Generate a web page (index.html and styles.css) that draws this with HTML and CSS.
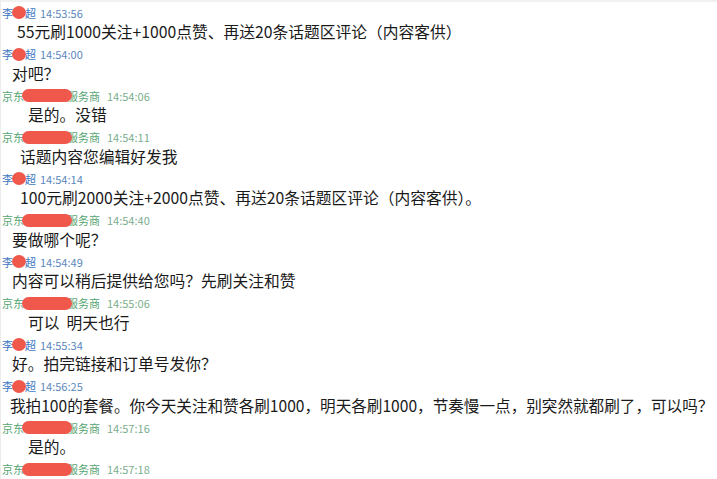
FILE: index.html
```html
<!DOCTYPE html>
<html lang="zh-CN">
<head>
<meta charset="utf-8">
<link rel="stylesheet" href="styles.css">
</head>
<body>
<div class="log">
  <div class="hd li"><span class="n">李</span><span class="dot"></span><span class="n">超</span><span class="t">14:53:56</span></div>
  <div class="msg i17">55元刷1000关注+1000点赞、再送20条话题区评论（内容客供）</div>
  <div class="hd li"><span class="n">李</span><span class="dot"></span><span class="n">超</span><span class="t">14:54:00</span></div>
  <div class="msg i12">对吧？</div>
  <div class="hd jd"><span class="n">京东</span><span class="bar"></span><span class="n">服务商</span><span class="t">14:54:06</span></div>
  <div class="msg i28">是的。没错</div>
  <div class="hd jd"><span class="n">京东</span><span class="bar"></span><span class="n">服务商</span><span class="t">14:54:11</span></div>
  <div class="msg i20">话题内容您编辑好发我</div>
  <div class="hd li"><span class="n">李</span><span class="dot"></span><span class="n">超</span><span class="t">14:54:14</span></div>
  <div class="msg i20">100元刷2000关注+2000点赞、再送20条话题区评论（内容客供）。</div>
  <div class="hd jd"><span class="n">京东</span><span class="bar"></span><span class="n">服务商</span><span class="t">14:54:40</span></div>
  <div class="msg i12">要做哪个呢？</div>
  <div class="hd li"><span class="n">李</span><span class="dot"></span><span class="n">超</span><span class="t">14:54:49</span></div>
  <div class="msg i12">内容可以稍后提供给您吗？先刷关注和赞</div>
  <div class="hd jd"><span class="n">京东</span><span class="bar"></span><span class="n">服务商</span><span class="t">14:55:06</span></div>
  <div class="msg i28">可以&nbsp; 明天也行</div>
  <div class="hd li"><span class="n">李</span><span class="dot"></span><span class="n">超</span><span class="t">14:55:34</span></div>
  <div class="msg i12">好。拍完链接和订单号发你？</div>
  <div class="hd li"><span class="n">李</span><span class="dot"></span><span class="n">超</span><span class="t">14:56:25</span></div>
  <div class="msg i10 long">我拍100的套餐。你今天关注和赞各刷1000，明天各刷1000，节奏慢一点，别突然就都刷了，可以吗？</div>
  <div class="hd jd"><span class="n">京东</span><span class="bar"></span><span class="n">服务商</span><span class="t">14:57:16</span></div>
  <div class="msg i28">是的。</div>
  <div class="hd jd"><span class="n">京东</span><span class="bar"></span><span class="n">服务商</span><span class="t">14:57:18</span></div>
</div>
</body>
</html>
```
FILE: styles.css
```css
html, body {
  margin: 0;
  padding: 0;
  background: #ffffff;
  width: 717px;
  height: 479px;
  overflow: hidden;
}
.log {
  display: flex;
  flex-direction: column;
  padding-top: 1px;
  height: 479px;
  border-top: 2px solid #f1f1f1;
  border-left: 1px solid #ececec;
  box-sizing: border-box;
  font-family: "Noto Sans CJK SC", "Microsoft YaHei", sans-serif;
}
.hd {
  display: flex;
  align-items: center;
  flex: none;
  height: 19px;
  padding-left: 1px;
  font-size: 11px;
  white-space: nowrap;
}
.hd.li { color: #3f78c4; }
.hd.li .t { color: #5b87bd; margin-left: 4px; }
.hd.jd { color: #55a572; }
.hd.jd .t { color: #7aae8e; margin-left: 7px; }
.dot {
  display: inline-block;
  width: 14px;
  height: 13px;
  border-radius: 50%;
  background: #f0584c;
  margin: 0 -1px 0 -1px;
}
.bar {
  display: inline-block;
  width: 50px;
  height: 13px;
  border-radius: 7px;
  background: #f0584c;
  margin: 0 -5px 0 -2px;
  position: relative;
  z-index: 1;
}
.msg {
  flex: none;
  height: 19px;
  line-height: 19px;
  padding-bottom: 3.5px;
  font-size: 15.75px;
  color: #1a1a1a;
  white-space: nowrap;
}
.msg.long { font-size: 15.6px; }
.i10 { padding-left: 9px; }
.i12 { padding-left: 11px; }
.i17 { padding-left: 16px; }
.i20 { padding-left: 19px; }
.i28 { padding-left: 27px; }
```
